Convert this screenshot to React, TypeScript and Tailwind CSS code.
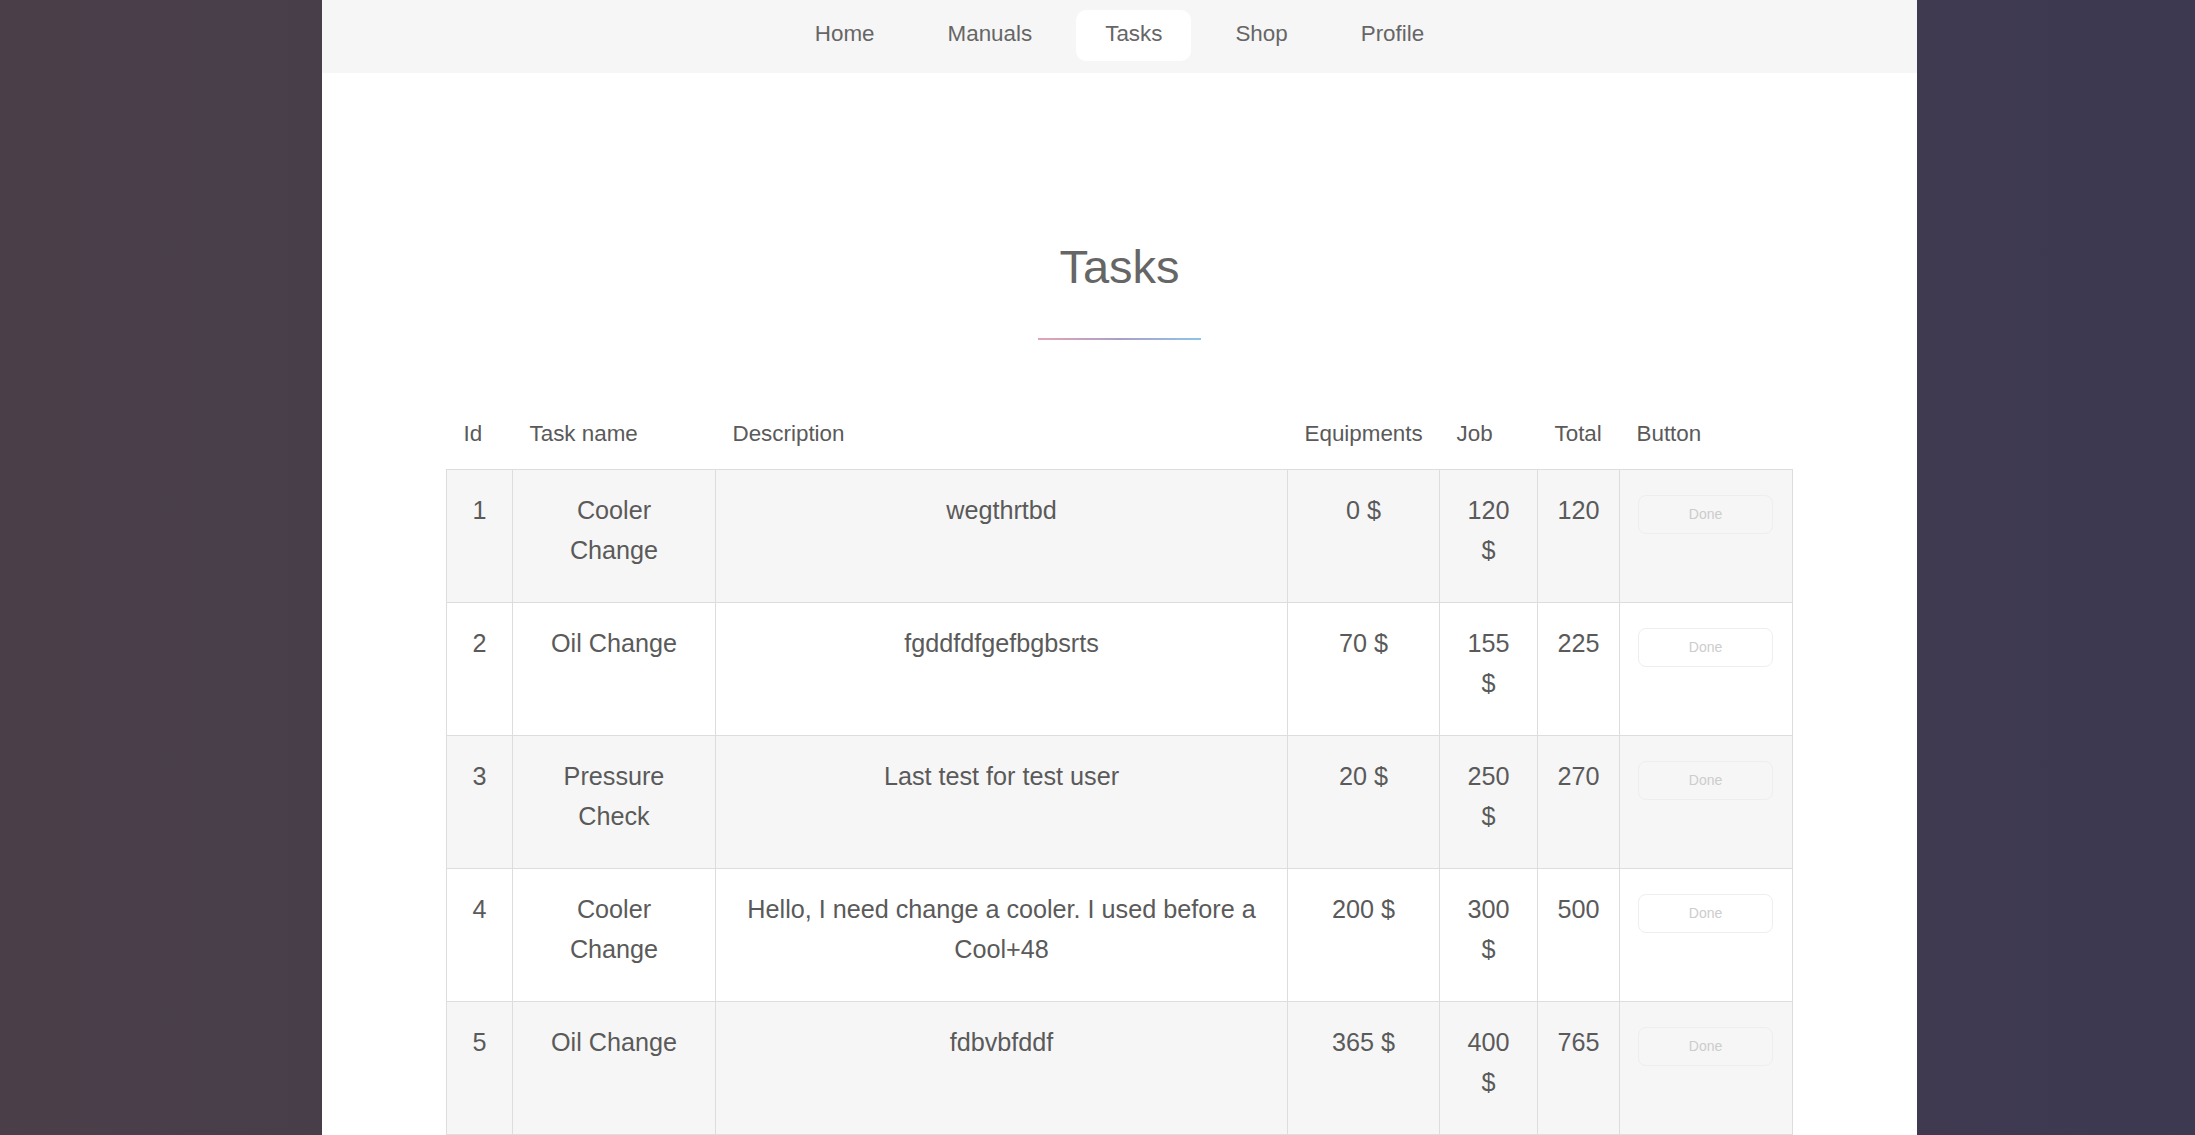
import React from "react";

type Task = {
  id: number;
  name: string;
  description: string;
  equipments: number;
  job: number;
};

const tasks: Task[] = [
  { id: 1, name: "Cooler Change", description: "wegthrtbd", equipments: 0, job: 120 },
  { id: 2, name: "Oil Change", description: "fgddfdfgefbgbsrts", equipments: 70, job: 155 },
  { id: 3, name: "Pressure Check", description: "Last test for test user", equipments: 20, job: 250 },
  {
    id: 4,
    name: "Cooler Change",
    description: "Hello, I need change a cooler. I used before a Cool+48",
    equipments: 200,
    job: 300,
  },
  { id: 5, name: "Oil Change", description: "fdbvbfddf", equipments: 365, job: 400 },
];

const links = ["Home", "Manuals", "Tasks", "Shop", "Profile"];

function Nav() {
  return (
    <nav className="h-[73px] bg-[#f6f6f6] flex items-start justify-center gap-[15px] pt-[10px]">
      {links.map((l) => (
        <a
          key={l}
          className={
            l === "Tasks"
              ? "h-[51px] flex items-center pb-[3px] px-[29px] rounded-[10px] bg-white text-[22.4px] text-[#666]"
              : "h-[51px] flex items-center pb-[3px] px-[29px] text-[22.4px] text-[#666]"
          }
        >
          {l}
        </a>
      ))}
    </nav>
  );
}

export default function App() {
  const cell = "border border-[#dddddd] align-top pt-[20px] text-center";
  return (
    <div
      className="min-h-screen w-full bg-gradient-to-r from-[#4a3f49] to-[#3d3951] pl-[322px]"
      style={{ fontFamily: '"Liberation Sans", Arial, sans-serif' }}
    >
      <div className="w-[1595px] min-h-screen bg-white">
        <Nav />
        <div className="flex flex-col items-center">
          <h1 className="mt-[167px] text-[47px] leading-[54px] text-[#666] font-normal">Tasks</h1>
          <div className="mt-[44px] h-[2px] w-[163px] bg-gradient-to-r from-[#e6a3b3] via-[#a99fc6] to-[#8cc4ea]" />
        </div>
        <div className="px-[124px] mt-[76px] pb-[60px]">
          <table className="w-full table-fixed border-collapse text-[#5a5a5a]">
            <colgroup>
              <col className="w-[66px]" />
              <col className="w-[203px]" />
              <col className="w-[572px]" />
              <col className="w-[152px]" />
              <col className="w-[98px]" />
              <col className="w-[82px]" />
              <col className="w-[173px]" />
            </colgroup>
            <thead>
              <tr className="text-[22.4px] leading-[36px]">
                {["Id", "Task name", "Description", "Equipments", "Job", "Total", "Button"].map((h) => (
                  <th key={h} className="text-left font-normal pl-[17px] pb-[17px] align-bottom">
                    {h}
                  </th>
                ))}
              </tr>
            </thead>
            <tbody className="text-[25.2px] leading-[40.3px]">
              {tasks.map((t, i) => (
                <tr key={t.id} className={i % 2 === 0 ? "h-[133px] bg-[#f6f6f6]" : "h-[133px] bg-white"}>
                  <td className={`${cell} px-[12px]`}>{t.id}</td>
                  <td className={`${cell} px-[20px]`}>{t.name}</td>
                  <td className={`${cell} px-[17px]`}>{t.description}</td>
                  <td className={`${cell} px-[17px]`}>{t.equipments} $</td>
                  <td className={`${cell} px-[20px]`}>{t.job} $</td>
                  <td className={`${cell} px-[12px]`}>{t.equipments + t.job}</td>
                  <td className={`${cell} pl-[18px] pr-[19px]`}>
                    <button className="mt-[4px] w-full h-[39px] rounded-[8px] border border-[#eeeeee] bg-transparent text-[14px] leading-none text-[#cccccc]">
                      Done
                    </button>
                  </td>
                </tr>
              ))}
            </tbody>
          </table>
        </div>
      </div>
    </div>
  );
}
